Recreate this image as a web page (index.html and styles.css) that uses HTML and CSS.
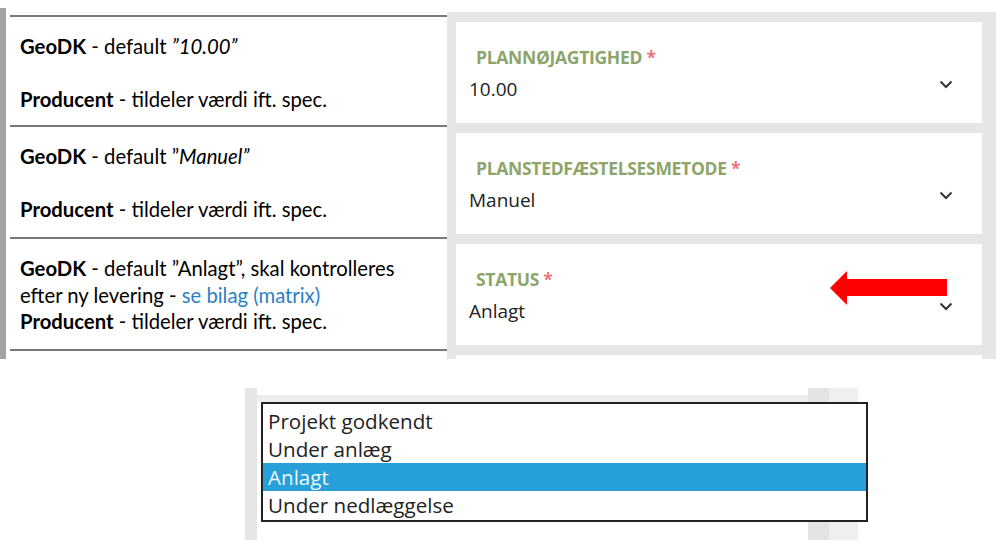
FILE: index.html
```html
<!DOCTYPE html>
<html lang="da">
<head>
<meta charset="utf-8">
<title>Status</title>
<link rel="stylesheet" href="styles.css">
</head>
<body>
<div class="top">
  <div class="side-bar"></div>
  <div class="notes">
    <div class="row">
      <p><b>GeoDK</b> - default <i>”10.00”</i></p>
      <p>&nbsp;</p>
      <p><b>Producent</b> - tildeler værdi ift. spec.</p>
    </div>
    <div class="row">
      <p><b>GeoDK</b> - default ”<i>Manuel”</i></p>
      <p>&nbsp;</p>
      <p><b>Producent</b> - tildeler værdi ift. spec.</p>
    </div>
    <div class="row last">
      <p><b>GeoDK</b> - default ”Anlagt”, skal kontrolleres<br>efter ny levering - <a class="link">se bilag (matrix)</a></p>
      <p><b>Producent</b> - tildeler værdi ift. spec.</p>
    </div>
  </div>
  <div class="panel">
    <div class="card">
      <div class="label">PLANNØJAGTIGHED <span class="req">*</span></div>
      <div class="value-row"><span class="value">10.00</span>
        <svg class="chev" width="14" height="9" viewBox="0 0 14 9"><path d="M1.5 1.5 L7 7 L12.5 1.5" fill="none" stroke="#333" stroke-width="2"/></svg>
      </div>
    </div>
    <div class="card">
      <div class="label">PLANSTEDFÆSTELSESMETODE <span class="req">*</span></div>
      <div class="value-row"><span class="value">Manuel</span>
        <svg class="chev" width="14" height="9" viewBox="0 0 14 9"><path d="M1.5 1.5 L7 7 L12.5 1.5" fill="none" stroke="#333" stroke-width="2"/></svg>
      </div>
    </div>
    <div class="card">
      <div class="label">STATUS <span class="req">*</span></div>
      <div class="value-row"><span class="value">Anlagt</span>
        <svg class="chev" width="14" height="9" viewBox="0 0 14 9"><path d="M1.5 1.5 L7 7 L12.5 1.5" fill="none" stroke="#333" stroke-width="2"/></svg>
      </div>
      <svg class="arrow" width="118" height="34" viewBox="0 0 118 34"><polygon points="0,17 17,0 17,8 117,8 117,25 17,25 17,34" fill="#ff0000"/></svg>
    </div>
    <div class="card"></div>
  </div>
</div>

<div class="dd">
  <div class="dd-left"></div>
  <div class="dd-mid"></div>
  <div class="dd-r1"></div>
  <div class="dd-r2"></div>
  <ul class="list">
    <li>Projekt godkendt</li>
    <li>Under anlæg</li>
    <li class="sel">Anlagt</li>
    <li>Under nedlæggelse</li>
  </ul>
</div>
</body>
</html>
```

FILE: styles.css
```css
* { box-sizing: border-box; }
body {
  margin: 0;
  background: #fff;
  font-family: Lato, "Open Sans", sans-serif;
  color: #000;
}
.top {
  display: flex;
  align-items: flex-start;
  margin-top: 8px;
  height: 351px;
}
.side-bar {
  width: 6px;
  height: 351px;
  background: #a3a3a3;
}
.notes {
  width: 437px;
  margin-left: 4px;
  padding-top: 7px;
}
.row {
  border-top: 2px solid #7a7a7a;
  height: 110px;
  padding: 16px 0 0 10px;
  font-size: 20.3px;
  line-height: 26.5px;
  white-space: nowrap;
}
.row + .row { height: 112px; }
.row.last { border-bottom: 2px solid #7a7a7a; height: 114px; }
.row p { margin: 0; }
.row b { font-weight: 700; }
.link { color: #2a7fc6; }
.panel {
  width: 549px;
  height: 347px;
  margin-top: 4px;
  background: #e6e6e6;
  padding: 10px 14px 0 9px;
  overflow: hidden;
  display: flex;
  flex-direction: column;
  gap: 10px;
}
.card {
  position: relative;
  flex: none;
  height: 101px;
  background: #fff;
  padding-top: 24px;
  font-family: "Open Sans", sans-serif;
}
.label {
  padding-left: 20px;
  font-size: 17.5px;
  line-height: 22px;
  font-weight: 700;
  color: #8da56b;
  letter-spacing: -0.3px;
}
.req { color: #e9767d; }
.value-row {
  display: flex;
  justify-content: space-between;
  align-items: flex-start;
  margin-top: 8px;
  padding: 0 29px 0 13px;
}
.value {
  font-size: 19px;
  line-height: 26px;
  color: #222;
}
.chev { margin-top: 4px; }
.arrow {
  position: absolute;
  left: 374px;
  top: 27px;
}
.dd {
  position: relative;
  margin: 29px 0 0 245px;
  width: 613px;
  height: 152px;
  display: flex;
}
.dd-left { width: 12px; background: #e6e6e6; }
.dd-mid { flex: 1; background: linear-gradient(#fff 0 7px, #ececec 7px 14px, #fff 14px); }
.dd-r1 { width: 21px; background: #e4e4e4; }
.dd-r2 { width: 29px; background: #efefef; }
.list {
  position: absolute;
  left: 16px;
  top: 14px;
  width: 607px;
  height: 120px;
  margin: 0;
  padding: 3px 0 0 0;
  list-style: none;
  background: #fff;
  border: 2px solid #222;
  font-family: "Open Sans", sans-serif;
  font-size: 20.6px;
  color: #222;
}
.list li {
  height: 28px;
  line-height: 28px;
  padding-left: 5px;
}
.list li.sel {
  background: #279fd9;
  color: #eef8fd;
}
```
